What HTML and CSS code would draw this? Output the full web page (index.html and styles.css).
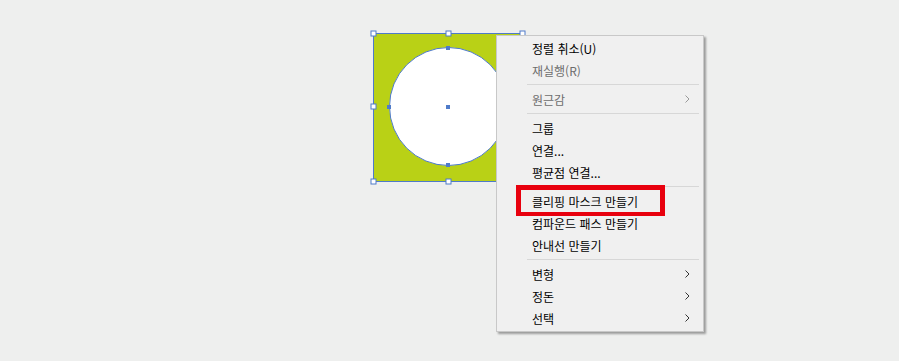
FILE: index.html
```html
<!DOCTYPE html>
<html lang="ko">
<head>
    <meta charset="UTF-8">
    <meta name="viewport" content="width=device-width, initial-scale=1.0">
    <title>Clipping Mask</title>
    <link rel="stylesheet" href="styles.css">
</head>
<body>

    <div class="canvas">
        <!-- selected artwork -->
        <svg class="artwork" width="160" height="160" viewBox="0 0 160 160">
            <rect x="5.5" y="5.5" width="149" height="148" fill="#b9d116" stroke="#4f7bc9" stroke-width="1"/>
            <circle cx="80.5" cy="78.5" r="59" fill="#fff" stroke="#4f7bc9" stroke-width="1"/>
            <!-- circle anchor points -->
            <rect x="78" y="18" width="4" height="4" fill="#4f7bc9"/>
            <rect x="19" y="77" width="4" height="4" fill="#4f7bc9"/>
            <rect x="78" y="135" width="4" height="4" fill="#4f7bc9"/>
            <rect x="78" y="77" width="4" height="4" fill="#4f7bc9"/>
            <!-- bounding box handles -->
            <g fill="#fff" stroke="#4f7bc9" stroke-width="1">
                <rect x="3" y="3" width="5" height="5"/>
                <rect x="78" y="3" width="5" height="5"/>
                <rect x="152" y="3" width="5" height="5"/>
                <rect x="3" y="76" width="5" height="5"/>
                <rect x="152" y="76" width="5" height="5"/>
                <rect x="3" y="151" width="5" height="5"/>
                <rect x="78" y="151" width="5" height="5"/>
                <rect x="152" y="151" width="5" height="5"/>
            </g>
        </svg>

        <ul class="context-menu">
            <li class="menu-item"><span>정렬 취소(U)</span></li>
            <li class="menu-item disabled"><span>재실행(R)</span></li>
            <li class="separator"></li>
            <li class="menu-item disabled"><span>원근감</span><svg class="arrow" width="5" height="8" viewBox="0 0 5 8"><path d="M0.5 0.5 L4 4 L0.5 7.5" fill="none" stroke="currentColor" stroke-width="1"/></svg></li>
            <li class="separator"></li>
            <li class="menu-item"><span>그룹</span></li>
            <li class="menu-item"><span>연결...</span></li>
            <li class="menu-item"><span>평균점 연결...</span></li>
            <li class="separator"></li>
            <li class="menu-item"><span>클리핑 마스크 만들기</span></li>
            <li class="menu-item"><span>컴파운드 패스 만들기</span></li>
            <li class="menu-item"><span>안내선 만들기</span></li>
            <li class="separator"></li>
            <li class="menu-item"><span>변형</span><svg class="arrow" width="5" height="8" viewBox="0 0 5 8"><path d="M0.5 0.5 L4 4 L0.5 7.5" fill="none" stroke="currentColor" stroke-width="1"/></svg></li>
            <li class="menu-item"><span>정돈</span><svg class="arrow" width="5" height="8" viewBox="0 0 5 8"><path d="M0.5 0.5 L4 4 L0.5 7.5" fill="none" stroke="currentColor" stroke-width="1"/></svg></li>
            <li class="menu-item"><span>선택</span><svg class="arrow" width="5" height="8" viewBox="0 0 5 8"><path d="M0.5 0.5 L4 4 L0.5 7.5" fill="none" stroke="currentColor" stroke-width="1"/></svg></li>
        </ul>

        <div class="highlight-box"></div>
    </div>

</body>
</html>
```

FILE: styles.css
```css
body {
    font-family: "Noto Sans CJK KR", "Noto Sans", sans-serif;
    margin: 0;
    padding: 0;
    background-color: #eeefee;
}

.canvas {
    position: relative;
    width: 899px;
    height: 361px;
    overflow: hidden;
}

.artwork {
    position: absolute;
    left: 368px;
    top: 28px;
    display: block;
}

.context-menu {
    position: absolute;
    left: 496px;
    top: 35px;
    width: 206px;
    margin: 0;
    padding: 1px 0 2px 0;
    list-style: none;
    background-color: #f0f0f0;
    border: 1px solid #c8c8c8;
    box-shadow: 2px 2px 2px rgba(0, 0, 0, 0.35);
}

.menu-item {
    display: flex;
    align-items: center;
    justify-content: space-between;
    height: 22px;
    padding: 0 13px 0 35px;
    font-size: 12px;
    color: #000;
}

.menu-item.disabled {
    color: #6d6d6d;
}

.arrow {
    display: block;
    color: #333;
}

.menu-item.disabled .arrow {
    color: #999;
}

.separator {
    height: 1px;
    margin: 3px 4px 3px 30px;
    background-color: #d7d7d7;
}

.highlight-box {
    position: absolute;
    left: 516px;
    top: 185px;
    width: 139px;
    height: 22px;
    border: 5px solid #e8000e;
    border-width: 5px 5px 4px 5px;
}
```
